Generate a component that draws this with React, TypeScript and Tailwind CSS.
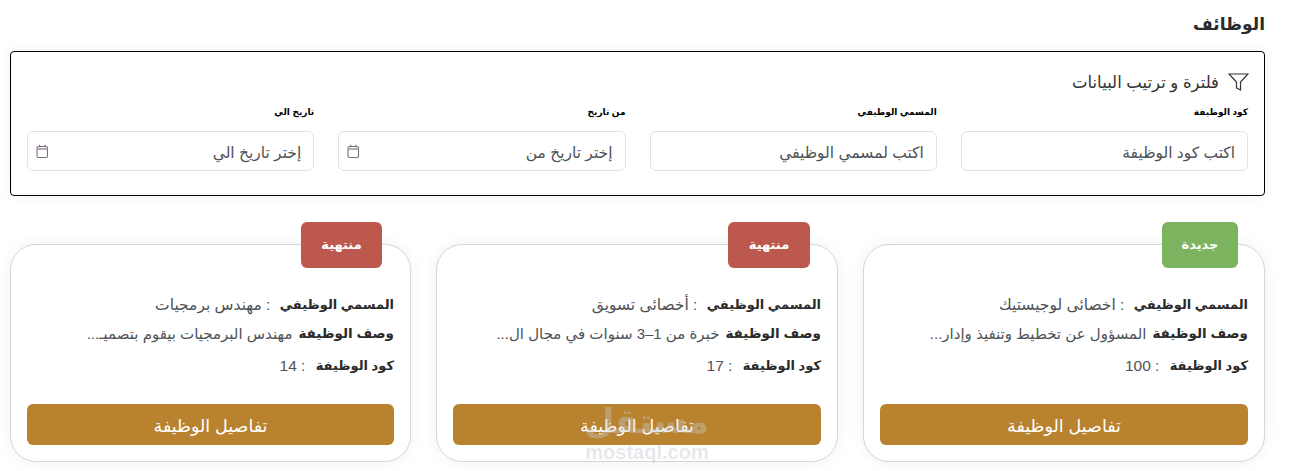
const font = "font-['Liberation_Sans','DejaVu_Sans',sans-serif]"

const jobs = [
  { status: "جديدة", color: "bg-[#7cb35f]", badge: "w-[76px] right-[26px]", title: "اخصائى لوجيستيك", desc: "المسؤول عن تخطيط وتنفيذ وإدار...", code: "100" },
  { status: "منتهية", color: "bg-[#bd584f]", badge: "w-[82px] right-[27px]", title: "أخصائى تسويق", desc: "خبرة من 1–3 سنوات في مجال ال...", code: "17" },
  { status: "منتهية", color: "bg-[#bd584f]", badge: "w-[81px] right-[28px]", title: "مهندس برمجيات", desc: "مهندس البرمجيات بيقوم بتصميـ...", code: "14" },
]

const filters = [
  { label: "كود الوظيفة", placeholder: "اكتب كود الوظيفة", date: false },
  { label: "المسمي الوظيفي", placeholder: "اكتب لمسمي الوظيفي", date: false },
  { label: "من تاريخ", placeholder: "إختر تاريخ من", date: true },
  { label: "تاريخ الي", placeholder: "إختر تاريخ الي", date: true },
]

function CalendarIcon() {
  return (
    <svg width="13" height="15" viewBox="0 0 13 15" fill="none" className="absolute left-[8px] top-[12px]">
      <rect x="1" y="2.5" width="10.5" height="11" rx="1.5" stroke="#77707a" strokeWidth="1.1" />
      <path d="M1 5h10.5" stroke="#a595a8" strokeWidth="1.6" />
      <path d="M3.6 .8v2.4M8.9 .8v2.4" stroke="#77707a" strokeWidth="1.1" />
    </svg>
  )
}

function Filter({ label, placeholder, date }: { label: string; placeholder: string; date: boolean }) {
  return (
    <div>
      <p className="text-[9px] leading-[14px] font-bold text-black mb-[12px]">{label}</p>
      <div className="relative h-[40px] rounded-md border border-[#e2e2e4] bg-white px-[12px] pt-[3px] flex items-center text-[15.5px] text-[#4f5256]">
        {placeholder}
        {date && <CalendarIcon />}
      </div>
    </div>
  )
}

function JobCard({ job }: { job: (typeof jobs)[number] }) {
  return (
    <div className="relative h-[218px] rounded-[26px] border border-[#d6d6d6] bg-white px-[16px] pt-[50px] shadow-[0_0_16px_rgba(0,0,0,0.06)]">
      <div className={`absolute top-[-23px] h-[46px] ${job.badge} ${job.color} rounded-md flex items-center justify-center text-white text-[13px] font-bold`}>
        {job.status}
      </div>
      <p className="flex gap-[5px] text-[15.5px] leading-[20px] text-[#4f5256] whitespace-nowrap">
        <b className="text-[13px] text-[#2b2b2b]">المسمي الوظيفي</b>
        <span>&nbsp;: {job.title}</span>
      </p>
      <p className="flex gap-[6px] text-[15px] leading-[20px] mt-[9px] text-[#4f5256] whitespace-nowrap">
        <b className="text-[13.5px] text-[#2b2b2b] shrink-0">وصف الوظيفة</b>
        <span>{job.desc}</span>
      </p>
      <p className="flex gap-[6px] text-[15.5px] leading-[20px] mt-[12px] text-[#4f5256] whitespace-nowrap">
        <b className="text-[13px] text-[#2b2b2b]">كود الوظيفة</b>
        <span>&nbsp;: {job.code}</span>
      </p>
      <button className="mt-[28px] w-full h-[41px] pt-[3px] rounded-md bg-[#b8822f] text-white text-[17.5px]">تفاصيل الوظيفة</button>
    </div>
  )
}

export default function App() {
  return (
    <div dir="rtl" className={`relative h-[471px] overflow-hidden bg-white pt-[13px] pr-[29px] pl-[10px] ${font}`}>
      <h1 className="text-[17px] leading-[24px] font-bold text-[#2b2b2b]">الوظائف</h1>
      <section className="mt-[14px] h-[145px] rounded-[4px] border border-black bg-white px-[16px] pt-[18px] shadow-[0_0_12px_rgba(0,0,0,0.06)]">
        <div className="flex items-center gap-[9px] h-[24px] text-[16.5px] text-[#333]">
          <svg width="21" height="20" viewBox="0 0 21 20" fill="none" stroke="#333" strokeWidth="1.2" className="mr-[-1px]">
            <path d="M1 2h19l-7.5 8v8l-4-2v-6z" />
          </svg>
          فلترة و ترتيب البيانات
        </div>
        <div className="grid grid-cols-4 gap-[24px] mt-[11px]">
          {filters.map((f) => (
            <Filter key={f.label} {...f} />
          ))}
        </div>
      </section>
      <div className="grid grid-cols-[402px_402px_401px] gap-[25px] mt-[48px]">
        {jobs.map((j) => (
          <JobCard key={j.code} job={j} />
        ))}
      </div>
      <div className="absolute left-[585px] top-[401px] w-[124px] text-center pointer-events-none">
        <div className="text-[34px] leading-[40px] font-bold text-[#c9ced3]/40">مستقل</div>
        <div className="text-[20px] leading-[22px] font-bold text-[#a9b1b9]/30">mostaql.com</div>
      </div>
    </div>
  )
}
